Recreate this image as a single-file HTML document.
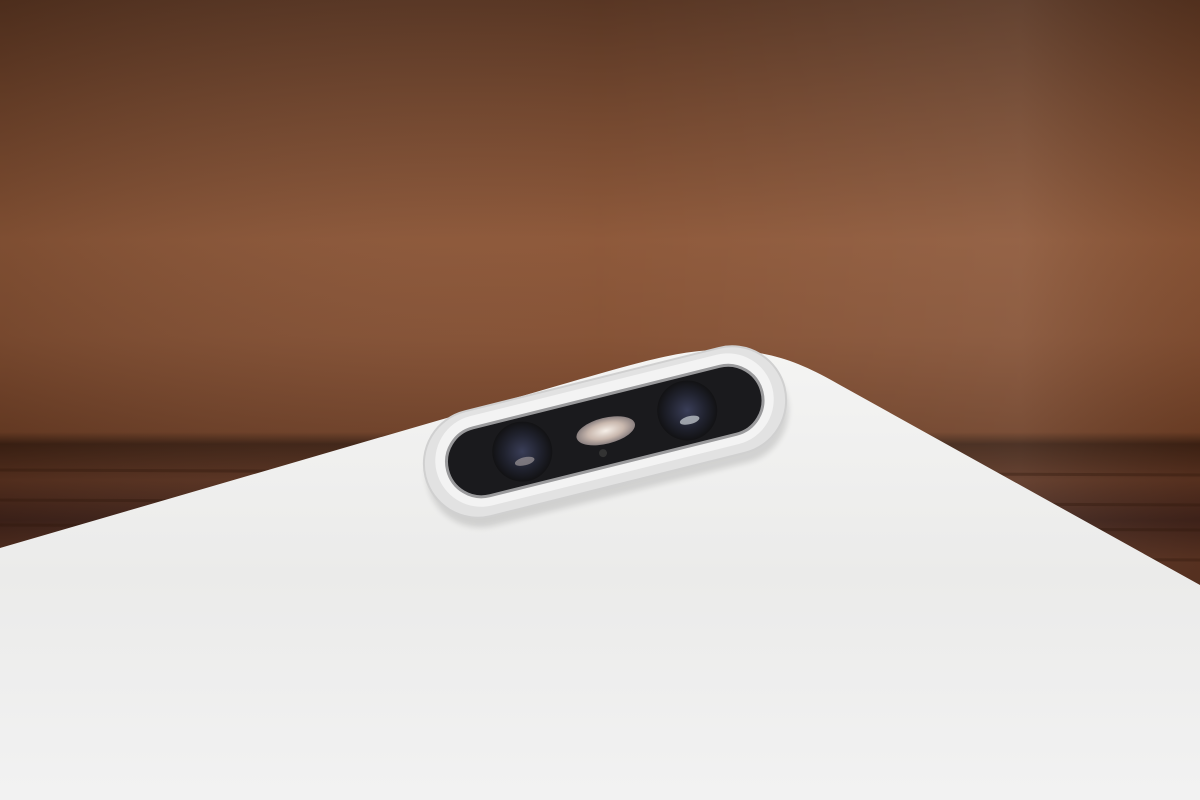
<!DOCTYPE html>
<html><head><meta charset="utf-8"><style>
html,body{margin:0;padding:0;width:1200px;height:800px;overflow:hidden;background:#6b4530}
svg{display:block}
</style></head><body>
<svg width="1200" height="800" viewBox="0 0 1200 800" xmlns="http://www.w3.org/2000/svg">
<defs>
<linearGradient id="wood" x1="0" y1="0" x2="0" y2="1">
<stop offset="0" stop-color="#55321f"/>
<stop offset="0.12" stop-color="#6c4129"/>
<stop offset="0.3" stop-color="#8c5637"/>
<stop offset="0.42" stop-color="#845033"/>
<stop offset="0.54" stop-color="#6e3f26"/>
<stop offset="0.555" stop-color="#3e2214"/>
<stop offset="0.6" stop-color="#5a3220"/>
<stop offset="0.65" stop-color="#40231a"/>
<stop offset="0.7" stop-color="#5a3322"/>
<stop offset="1" stop-color="#48281a"/>
</linearGradient>
<linearGradient id="woodh" x1="0" y1="0" x2="1" y2="0">
<stop offset="0" stop-color="#000" stop-opacity="0.1"/>
<stop offset="0.5" stop-color="#fff" stop-opacity="0.02"/>
<stop offset="0.85" stop-color="#fff" stop-opacity="0.08"/>
<stop offset="1" stop-color="#000" stop-opacity="0.05"/>
</linearGradient>
<linearGradient id="phone" x1="0" y1="0" x2="0" y2="1">
<stop offset="0" stop-color="#f4f4f3"/>
<stop offset="0.5" stop-color="#ebebea"/>
<stop offset="1" stop-color="#f2f2f2"/>
</linearGradient>
<radialGradient id="lens" cx="0.5" cy="0.5" r="0.5">
<stop offset="0" stop-color="#3a3e58"/>
<stop offset="0.6" stop-color="#20222e"/>
<stop offset="1" stop-color="#121214"/>
</radialGradient>
<radialGradient id="flash" cx="0.5" cy="0.5" r="0.5">
<stop offset="0" stop-color="#f6efe8"/>
<stop offset="0.6" stop-color="#c9b8ae"/>
<stop offset="1" stop-color="#8a8080"/>
</radialGradient>
<filter id="blur"><feGaussianBlur stdDeviation="3"/></filter>
</defs>
<rect width="1200" height="800" fill="url(#wood)"/>
<rect width="1200" height="800" fill="url(#woodh)"/>
<g stroke="#2e170c" stroke-opacity="0.35" stroke-width="3">
<line x1="0" y1="470" x2="1200" y2="475"/>
<line x1="0" y1="500" x2="1200" y2="505"/>
<line x1="0" y1="525" x2="1200" y2="530"/>
<line x1="0" y1="555" x2="1200" y2="560"/>
</g>
<path d="M0,548 L560,385 C640,362 680,350 720,350 C770,350 800,362 840,385 L1200,585 L1200,800 L0,800 Z" fill="#000" opacity="0.25" filter="url(#blur)" transform="translate(0,6)"/>
<path d="M0,548 L560,385 C640,362 680,350 720,350 C770,350 800,362 840,385 L1200,585 L1200,800 L0,800 Z" fill="url(#phone)"/>
<g transform="rotate(-14 605 432)">
<rect x="420" y="380" width="370" height="108" rx="54" fill="#000" opacity="0.12" filter="url(#blur)" transform="translate(0,8)"/>
<rect x="420" y="378" width="370" height="108" rx="54" fill="#e2e2e2" stroke="#d0d0d0" stroke-width="2"/>
<rect x="432" y="384" width="346" height="92" rx="46" fill="#f3f3f3"/>
<rect x="443" y="396" width="324" height="70" rx="35" fill="#1a1a1d" stroke="#9a9a9c" stroke-width="3"/>
<circle cx="520" cy="431" r="30" fill="url(#lens)"/>
<circle cx="690" cy="431" r="30" fill="url(#lens)"/>
<ellipse cx="606" cy="431" rx="30" ry="13" fill="url(#flash)"/>
<circle cx="598" cy="452" r="4" fill="#333"/>
<ellipse cx="690" cy="441" rx="10" ry="4" fill="#cfd4d8" opacity="0.7"/>
<ellipse cx="520" cy="441" rx="10" ry="4" fill="#b0a8a8" opacity="0.6"/>
</g>
</svg>
</body></html>
